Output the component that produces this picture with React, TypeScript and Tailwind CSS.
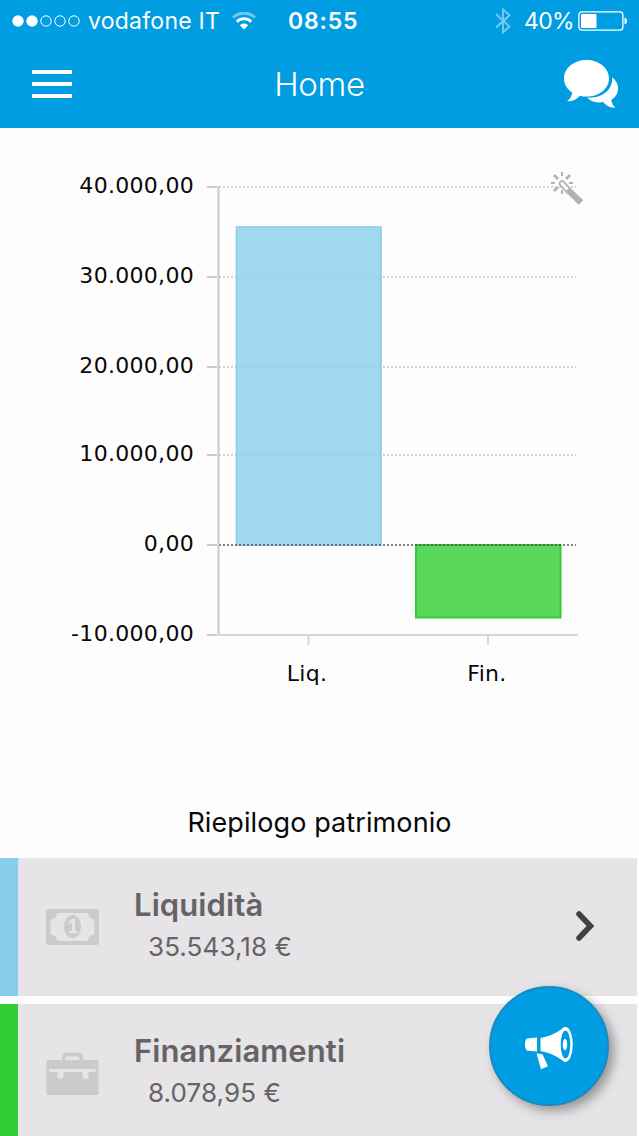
import type { ReactNode } from 'react'

const gridLines = [
    { y: 59, label: '40.000,00' },
    { y: 149, label: '30.000,00' },
    { y: 239, label: '20.000,00' },
    { y: 327, label: '10.000,00' },
    { y: 417, label: '0,00' },
    { y: 507, label: '-10.000,00' },
]

function SignalDots() {
    return (
        <svg className="w-[68px] h-3 shrink-0" viewBox="0 0 68 12" fill="none" stroke="white">
            <circle cx="6" cy="6" r="5.7" fill="white" stroke="none" />
            <circle cx="20" cy="6" r="5.7" fill="white" stroke="none" />
            <circle cx="34" cy="6" r="5.2" />
            <circle cx="48" cy="6" r="5.2" />
            <circle cx="62" cy="6" r="5.2" />
        </svg>
    )
}

function StatusBar() {
    return (
        <div className="h-[42px] flex items-center text-white pl-3 pr-[11px]">
            <SignalDots />
            <span className="ml-2 w-[132px] text-[23px] leading-[42px] tracking-[0.25px] whitespace-nowrap">vodafone IT</span>
            <svg className="ml-3 w-6 h-[18px] shrink-0" viewBox="0 0 24 18" fill="none" stroke="white" strokeWidth="3">
                <path d="M1 5.4C7-.2 17-.2 23 5.4" opacity=".45" />
                <path d="M4.8 9.6c4.2-3.8 10.2-3.8 14.4 0" />
                <path d="M7.8 13.2c2.4-2.4 6-2.4 8.4 0L12 17.6Z" fill="white" stroke="none" />
            </svg>
            <span className="ml-8 w-[71px] text-[23px] leading-[42px] font-semibold tracking-[0.85px] whitespace-nowrap">08:55</span>
            <svg className="ml-auto w-4 h-[26px] shrink-0" viewBox="0 0 16 26" fill="none" stroke="#79c8f0" strokeWidth="1.9">
                <path d="M1 6.3 14.5 18.5 8 24.5V1.5l6.5 5.8L1 19.5" />
            </svg>
            <span className="ml-[13px] w-[50px] text-[23px] leading-[42px] tracking-[-0.7px] whitespace-nowrap">40%</span>
            <svg className="ml-1 w-[50px] h-5 shrink-0" viewBox="0 0 50 20">
                <rect x=".9" y=".9" width="44" height="18.2" rx="3" fill="none" stroke="white" strokeWidth="1.3" />
                <rect x="3" y="3" width="15.5" height="14" rx="1" fill="white" />
                <path d="M46.5 6.5c3.3.8 3.3 6.2 0 7Z" fill="white" />
            </svg>
        </div>
    )
}

function Header() {
    return (
        <header className="h-32 bg-[#009de2]">
            <StatusBar />
            <div className="h-[84px] grid grid-cols-3 items-center pl-8 pr-5 text-white">
                <div className="w-10 flex flex-col gap-2">
                    <div className="h-1 bg-white" />
                    <div className="h-1 bg-white" />
                    <div className="h-1 bg-white" />
                </div>
                <h1 className="text-[33px] text-center -ml-3 pt-0.5 tracking-[-0.3px] font-[350]">Home</h1>
                <svg className="justify-self-end w-[56px] h-[50px]" viewBox="0 0 56 50" fill="white">
                    <path d="M23.5 1C11 1 1 9.2 1 19.4c0 5.8 3.2 10.8 8.2 14.1-.5 4-2.2 6.4-5.2 8.7 5.2.2 9.3-1.6 12.8-5.5 2.1.6 4.4.9 6.7.9C36 37.6 46 29.6 46 19.4S36 1 23.5 1Z" />
                    <path d="M49 18.2c3.9 3 6.1 6.5 6.1 11 0 4.9-2.5 9-6.8 11.7.6 3.1 1.4 5.2 4 7.8-5.4.3-9.3-2.4-12.2-5.7-6.1 1.3-12.2 0-15.8-4.4C38.5 39.5 50.4 31.1 49 18.2Z" />
                </svg>
            </div>
        </header>
    )
}

function Chart() {
    return (
        <svg className="block w-full h-[660px]" viewBox="0 0 639 660">
            <g className="font-['DejaVu_Sans',sans-serif] text-[22px] tracking-[0.3px]" fill="#080808">
                {gridLines.map(({ y, label }) => (
                    <text key={label} x="194" y={y + 6} textAnchor="end">{label}</text>
                ))}
                <text x="307" y="553" textAnchor="middle">Liq.</text>
                <text x="487" y="553" textAnchor="middle">Fin.</text>
            </g>
            {gridLines.slice(0, 4).map(({ y }) => (
                <path key={y} d={`M219 ${y}H576`} stroke="#c6c6ca" strokeWidth="1.6" strokeDasharray="2 2" />
            ))}
            <g>
                <rect x="236.5" y="99" width="144.5" height="318" fill="#87ceeb" fillOpacity=".8" stroke="#87ceeb" strokeWidth="1.6" />
                <rect x="416" y="417" width="144.5" height="72.5" fill="#32cd32" fillOpacity=".8" stroke="#32cd32" strokeWidth="2" />
            </g>
            <path d="M219 417H576" stroke="#555" strokeWidth="1.6" strokeDasharray="2 2" />
            <g stroke="#cbc8ce" strokeWidth="2" fill="none">
                <path d="M218.5 58V507" />
                <path d="M218 507H578M308.5 507v10M488 507v10" stroke="#d6d6d9" />
                {gridLines.map(({ y }) => (
                    <path key={y} d={`M207 ${y}H217`} />
                ))}
            </g>
            {/* magic wand */}
            <g stroke="#b2b2b2" strokeWidth="2" fill="none">
                <path d="M562 44v4M562 62v4M551 55h4M569 55h4" />
                <path d="m554 47 4 4M570 47l-4 4M554 63l4-4" strokeWidth="2.8" />
                <path d="m562 55.5 6.5 7" strokeWidth="6.5" strokeLinecap="round" />
                <path d="m562 55.500 6 6.500" stroke="#fdfdfd" strokeWidth="3.2" strokeLinecap="round" />
                <path d="m567.5 61.5 13.5 13" strokeWidth="6.5" />
            </g>
        </svg>
    )
}

function BillIcon() {
    return (
        <svg className="w-[53px] h-9" viewBox="0 0 53 36" fill="#cbcacc">
            <path
                fillRule="evenodd"
                d="M1.5 0h50L53 1.5v33L51.5 36h-50L0 34.5v-33ZM11 4c-.5 4-2.5 6-6.5 6.5v15C8.5 26 10.5 28 11 32h31c.5-4 2.5-6 6.5-6.5v-15C44.5 10 42.5 8 42 4Z"
            />
            <ellipse cx="26.5" cy="17.5" rx="8.5" ry="11.5" />
            <path d="m22.5 13 3.5-3.5h3V22h2.500v2.500h-8V22H26v-8.500l-2 1.500Z" fill="#e6e4e7" />
        </svg>
    )
}

function BriefcaseIcon() {
    return (
        <svg className="w-[53px] h-[43px]" viewBox="0 0 53 43" fill="#cbcacc">
            <path fillRule="evenodd" d="M15.5 8 17 2.5Q17.5.5 19.5.5h14q2 0 2.5 2L37.5 8H51q1.5 0 1.5 1.5v32q0 1.5-1.5 1.5H2Q.5 43 .5 41.5v-32Q.5 8 2 8Zm3.500 0h15l-1.200-3.500H20.200Z" />
            <path d="M3.5 17h46v3h-7v5l-2 2h-2l-2-2v-5h-19v5l-2 2h-2l-2-2v-5h-8Z" fill="#e6e4e7" />
        </svg>
    )
}

interface SummaryRowProps {
    stripe: string
    icon: ReactNode
    title: string
    amount: string
    arrow?: boolean
}

function SummaryRow({ stripe, icon, title, amount, arrow }: SummaryRowProps) {
    return (
        <div className="h-[138px] mr-[2px] flex items-center bg-[#e6e4e7] shrink-0">
            <div className={`w-[18px] h-full ${stripe}`} />
            <div className="ml-7 w-[53px]">{icon}</div>
            <div className="ml-[35px] pb-0.5 text-[#656366] whitespace-nowrap">
                <div className="text-[31px] leading-[42px] font-semibold tracking-[0.1px]">{title}</div>
                <div className="ml-3.5 text-[26px] leading-[42px] tracking-[0.1px]">{amount}</div>
            </div>
            {arrow && (
                <svg className="ml-auto mr-[42px] mb-0.5 w-5 h-8" viewBox="0 0 20 32" fill="none" stroke="#414043" strokeWidth="5.5" strokeLinecap="round">
                    <path d="m4 4 11.5 12L4 28" />
                </svg>
            )}
        </div>
    )
}

function MegaphoneButton() {
    return (
        <button className="absolute left-[489px] top-[986px] size-[120px] rounded-full bg-[#009de2] border-2 border-[#168bc3] shadow-[5px_5px_11px_rgba(0,0,0,0.35)] flex items-center justify-center">
            <svg className="w-[50px] h-[44px] mt-1.5" viewBox="0 0 50 44" fill="white">
                <path d="M2.5 11.5 13 10.5v14L2.5 23.5C.3 19.5.3 15.5 2.5 11.5Z" />
                <path d="M16.5 11C26 9.5 34 5 41 0v35c-7-5-15-9.5-24.5-11Z" />
                <ellipse cx="41.5" cy="17.5" rx="7.3" ry="17.5" />
                <ellipse cx="41.5" cy="17.5" rx="4.8" ry="14" fill="#009de2" />
                <ellipse cx="41" cy="17.5" rx="2.2" ry="5.8" />
                <path d="m12.5 26.5 6 .8 5.5 12-7 3Z" />
            </svg>
        </button>
    )
}

export default function App() {
    return (
        <div className="relative w-full max-w-[639px] h-[1136px] overflow-hidden bg-[#fdfdfd] font-[Inter,'Liberation_Sans',sans-serif]">
            <Header />
            <Chart />
            <h2 className="h-[70px] text-center text-[27px] leading-[69px] tracking-[0.1px] text-[#080808]">Riepilogo patrimonio</h2>
            <div className="flex flex-col gap-2">
                <SummaryRow stripe="bg-[#87ceeb]" icon={<BillIcon />} title="Liquidità" amount="35.543,18 €" arrow />
                <SummaryRow stripe="bg-[#32cd32]" icon={<BriefcaseIcon />} title="Finanziamenti" amount="8.078,95 €" />
            </div>
            <MegaphoneButton />
        </div>
    )
}
